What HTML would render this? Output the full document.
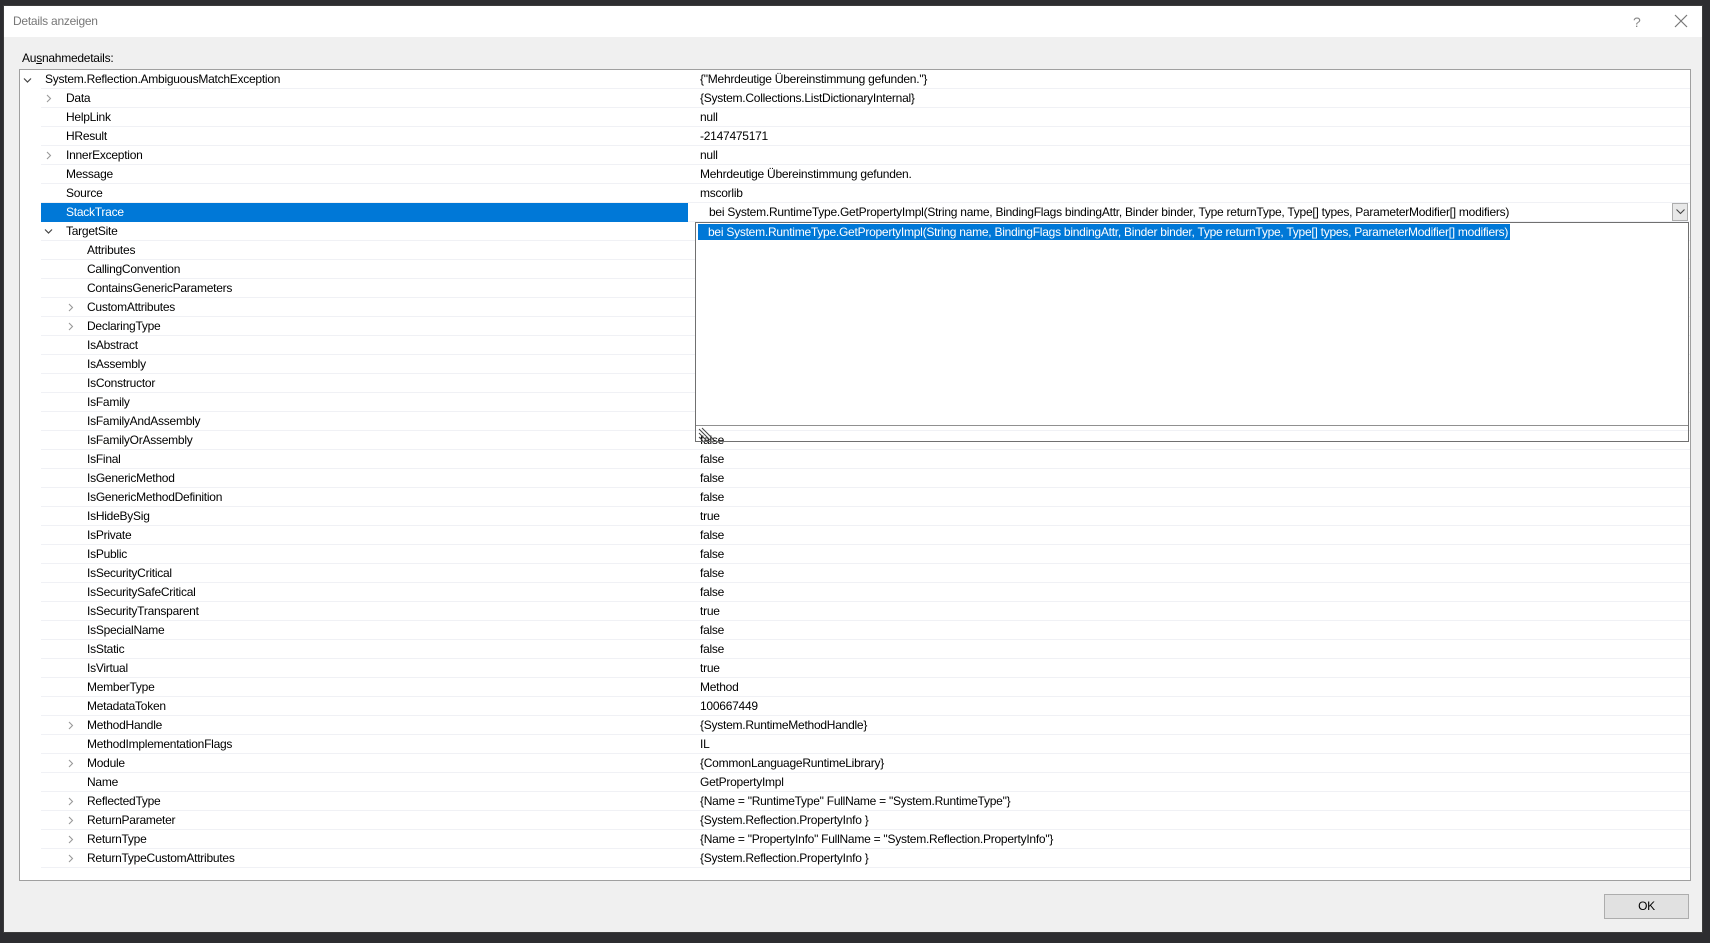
<!DOCTYPE html>
<html><head><meta charset="utf-8"><style>
*{margin:0;padding:0;box-sizing:border-box}
body{width:1710px;height:943px;background:#2d2d30;position:relative;overflow:hidden;font-family:"Liberation Sans",sans-serif;font-size:12px;color:#000;letter-spacing:-0.25px}
#dlg{position:absolute;left:3px;top:5px;width:1700px;height:928px;background:#f0f0f0;border:1px solid #3c3c3c}
#tb{position:absolute;left:0;top:0;width:100%;height:31px;background:#fff}
#tb .t{position:absolute;left:9px;top:8px;color:#777;font-size:12px}
#tb .q{position:absolute;left:1629px;top:8px;color:#888;font-size:14px}
#tb .x{position:absolute;left:1668px;top:6px;width:18px;height:18px}
.lbl{position:absolute;left:18px;top:45px}
#tree{position:absolute;left:15px;top:63px;width:1672px;height:812px;background:#fff;border:1px solid #a0a0a0;overflow:hidden}
.r{position:absolute;left:21px;width:1650px;height:19px;border-bottom:1px solid #f0f1f5;line-height:18px}
.r .n{position:absolute}
.r .v{position:absolute;left:659px;white-space:nowrap}
.l0{left:4px}.l1{left:25px}.l2{left:46px}
.a{position:absolute;top:4px;width:9px;height:9px}
.sel{background:#0078d7;color:#fff;width:647px}
#pop{position:absolute;left:695px;top:222px;width:994px;height:220px;border:1px solid #707070}
#pop .w{position:absolute;left:0;top:0;width:100%;height:202px;background:#fff}
#pop .h{position:absolute;left:2px;top:1px;height:16px;background:#0078d7;color:#fff;padding:0 2px 0 10px;line-height:16px;white-space:nowrap}
#pop .g{position:absolute;left:0;top:202px;width:100%;height:1px;background:#909090}
#dd{position:absolute;left:1672px;top:203px;width:16px;height:18px;border:1px solid #adadad;background:#e8e8e8}
#ok{position:absolute;left:1600px;top:888px;width:85px;height:25px;background:#e1e1e1;border:1px solid #adadad;text-align:center;line-height:23px}
</style></head><body>
<div id="dlg">
<div id="tb"><span class="t">Details anzeigen</span><span class="q">?</span>
<svg class="x" viewBox="0 0 18 18"><path d="M3 3L15 15M15 3L3 15" stroke="#777" stroke-width="1.2"/></svg></div>
<div class="lbl">Au<u>s</u>nahmedetails:</div>
<div id="tree">
<svg class="a" style="left:3px;top:6px" viewBox="0 0 9 9"><path d="M1 2.5L4.5 6L8 2.5" fill="none" stroke="#444" stroke-width="1.2"/></svg>
<div class="r" style="top:0"><span class="n l0">System.Reflection.AmbiguousMatchException</span><span class="v">{"Mehrdeutige Übereinstimmung gefunden."}</span></div>
<div class="r" style="top:19px"><svg class="a" style="left:3px;top:5px" viewBox="0 0 9 9"><path d="M3 1L6.5 4.5L3 8" fill="none" stroke="#999" stroke-width="1.1"/></svg><span class="n l1">Data</span><span class="v">{System.Collections.ListDictionaryInternal}</span></div>
<div class="r" style="top:38px"><span class="n l1">HelpLink</span><span class="v">null</span></div>
<div class="r" style="top:57px"><span class="n l1">HResult</span><span class="v">-2147475171</span></div>
<div class="r" style="top:76px"><svg class="a" style="left:3px;top:5px" viewBox="0 0 9 9"><path d="M3 1L6.5 4.5L3 8" fill="none" stroke="#999" stroke-width="1.1"/></svg><span class="n l1">InnerException</span><span class="v">null</span></div>
<div class="r" style="top:95px"><span class="n l1">Message</span><span class="v">Mehrdeutige Übereinstimmung gefunden.</span></div>
<div class="r" style="top:114px"><span class="n l1">Source</span><span class="v">mscorlib</span></div>
<div class="r" style="top:133px"><div class="sel" style="position:absolute;left:0;top:0;height:19px"></div><span class="n l1" style="color:#fff">StackTrace</span><span class="v" style="left:668px">bei System.RuntimeType.GetPropertyImpl(String name, BindingFlags bindingAttr, Binder binder, Type returnType, Type[] types, ParameterModifier[] modifiers)</span></div>
<div class="r" style="top:152px"><svg class="a" style="left:3px;top:5px" viewBox="0 0 9 9"><path d="M1 2.5L4.5 6L8 2.5" fill="none" stroke="#444" stroke-width="1.2"/></svg><span class="n l1">TargetSite</span></div>
<div class="r" style="top:171px"><span class="n l2">Attributes</span></div>
<div class="r" style="top:190px"><span class="n l2">CallingConvention</span></div>
<div class="r" style="top:209px"><span class="n l2">ContainsGenericParameters</span></div>
<div class="r" style="top:228px"><svg class="a" style="left:25px;top:5px" viewBox="0 0 9 9"><path d="M3 1L6.5 4.5L3 8" fill="none" stroke="#999" stroke-width="1.1"/></svg><span class="n l2">CustomAttributes</span></div>
<div class="r" style="top:247px"><svg class="a" style="left:25px;top:5px" viewBox="0 0 9 9"><path d="M3 1L6.5 4.5L3 8" fill="none" stroke="#999" stroke-width="1.1"/></svg><span class="n l2">DeclaringType</span></div>
<div class="r" style="top:266px"><span class="n l2">IsAbstract</span></div>
<div class="r" style="top:285px"><span class="n l2">IsAssembly</span></div>
<div class="r" style="top:304px"><span class="n l2">IsConstructor</span></div>
<div class="r" style="top:323px"><span class="n l2">IsFamily</span></div>
<div class="r" style="top:342px"><span class="n l2">IsFamilyAndAssembly</span></div>
<div class="r" style="top:361px"><span class="n l2">IsFamilyOrAssembly</span><span class="v">false</span></div>
<div class="r" style="top:380px"><span class="n l2">IsFinal</span><span class="v">false</span></div>
<div class="r" style="top:399px"><span class="n l2">IsGenericMethod</span><span class="v">false</span></div>
<div class="r" style="top:418px"><span class="n l2">IsGenericMethodDefinition</span><span class="v">false</span></div>
<div class="r" style="top:437px"><span class="n l2">IsHideBySig</span><span class="v">true</span></div>
<div class="r" style="top:456px"><span class="n l2">IsPrivate</span><span class="v">false</span></div>
<div class="r" style="top:475px"><span class="n l2">IsPublic</span><span class="v">false</span></div>
<div class="r" style="top:494px"><span class="n l2">IsSecurityCritical</span><span class="v">false</span></div>
<div class="r" style="top:513px"><span class="n l2">IsSecuritySafeCritical</span><span class="v">false</span></div>
<div class="r" style="top:532px"><span class="n l2">IsSecurityTransparent</span><span class="v">true</span></div>
<div class="r" style="top:551px"><span class="n l2">IsSpecialName</span><span class="v">false</span></div>
<div class="r" style="top:570px"><span class="n l2">IsStatic</span><span class="v">false</span></div>
<div class="r" style="top:589px"><span class="n l2">IsVirtual</span><span class="v">true</span></div>
<div class="r" style="top:608px"><span class="n l2">MemberType</span><span class="v">Method</span></div>
<div class="r" style="top:627px"><span class="n l2">MetadataToken</span><span class="v">100667449</span></div>
<div class="r" style="top:646px"><svg class="a" style="left:25px;top:5px" viewBox="0 0 9 9"><path d="M3 1L6.5 4.5L3 8" fill="none" stroke="#999" stroke-width="1.1"/></svg><span class="n l2">MethodHandle</span><span class="v">{System.RuntimeMethodHandle}</span></div>
<div class="r" style="top:665px"><span class="n l2">MethodImplementationFlags</span><span class="v">IL</span></div>
<div class="r" style="top:684px"><svg class="a" style="left:25px;top:5px" viewBox="0 0 9 9"><path d="M3 1L6.5 4.5L3 8" fill="none" stroke="#999" stroke-width="1.1"/></svg><span class="n l2">Module</span><span class="v">{CommonLanguageRuntimeLibrary}</span></div>
<div class="r" style="top:703px"><span class="n l2">Name</span><span class="v">GetPropertyImpl</span></div>
<div class="r" style="top:722px"><svg class="a" style="left:25px;top:5px" viewBox="0 0 9 9"><path d="M3 1L6.5 4.5L3 8" fill="none" stroke="#999" stroke-width="1.1"/></svg><span class="n l2">ReflectedType</span><span class="v">{Name = "RuntimeType" FullName = "System.RuntimeType"}</span></div>
<div class="r" style="top:741px"><svg class="a" style="left:25px;top:5px" viewBox="0 0 9 9"><path d="M3 1L6.5 4.5L3 8" fill="none" stroke="#999" stroke-width="1.1"/></svg><span class="n l2">ReturnParameter</span><span class="v">{System.Reflection.PropertyInfo }</span></div>
<div class="r" style="top:760px"><svg class="a" style="left:25px;top:5px" viewBox="0 0 9 9"><path d="M3 1L6.5 4.5L3 8" fill="none" stroke="#999" stroke-width="1.1"/></svg><span class="n l2">ReturnType</span><span class="v">{Name = "PropertyInfo" FullName = "System.Reflection.PropertyInfo"}</span></div>
<div class="r" style="top:779px"><svg class="a" style="left:25px;top:5px" viewBox="0 0 9 9"><path d="M3 1L6.5 4.5L3 8" fill="none" stroke="#999" stroke-width="1.1"/></svg><span class="n l2">ReturnTypeCustomAttributes</span><span class="v">{System.Reflection.PropertyInfo }</span></div>
</div>
<div id="ok">OK</div>
</div>
<div id="dd"><svg style="position:absolute;left:3px;top:5px" width="9" height="6" viewBox="0 0 9 6"><path d="M0.5 0.5L4.5 4.5L8.5 0.5" fill="none" stroke="#444" stroke-width="1.1"/></svg></div>
<div id="pop"><div class="w"></div><div class="h">bei System.RuntimeType.GetPropertyImpl(String name, BindingFlags bindingAttr, Binder binder, Type returnType, Type[] types, ParameterModifier[] modifiers)</div>
<div class="g"></div><svg style="position:absolute;left:2px;top:204px" width="16" height="14" viewBox="0 0 16 14"><path d="M1 2L13 14M1 6L9 14M1 10L5 14M4 1L16 13" stroke="#444" stroke-width="1"/></svg></div>
</body></html>
